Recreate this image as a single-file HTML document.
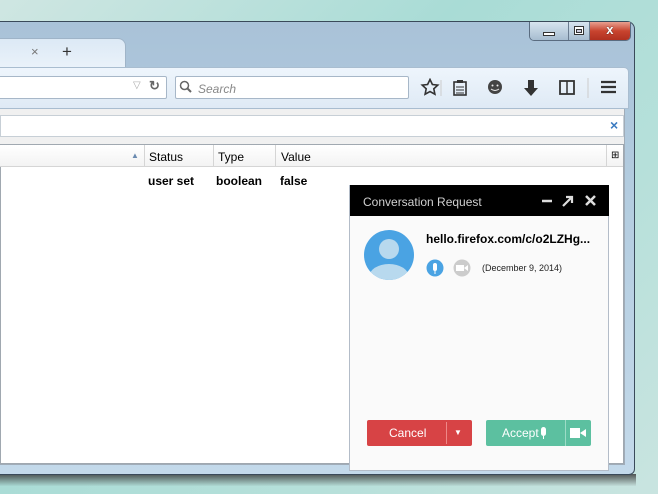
<!DOCTYPE html>
<html><head><meta charset="utf-8"><style>
*{margin:0;padding:0;box-sizing:border-box}
body{width:658px;height:494px;overflow:hidden;position:relative;font-family:"Liberation Sans",sans-serif;
background:linear-gradient(135deg,#cfe6e2 0%,#a9dcd6 40%,#b6e0da 70%,#c9e4e0 100%)}
.abs{position:absolute}
.shadow{left:0;top:474px;width:636px;height:12px;background:linear-gradient(rgba(60,60,60,0.85),rgba(120,120,120,0.05))}
.win{left:-4px;top:21px;width:639px;height:454px;border:1px solid #3a4a5a;border-radius:0 8px 6px 0;
background:linear-gradient(#a9c2d8,#b4cde0 40%,#c3d9ea)}
.cap{top:22px;left:529px;width:102px;height:19px;border:1px solid #5a6c80;border-top:none;border-radius:0 0 5px 5px;overflow:hidden;display:flex}
.cap>div{height:100%;position:relative}
.tab{left:-10px;top:38px;width:136px;height:30px;background:linear-gradient(#dce9f5,#eaf2fa);border:1px solid #9fb4c8;border-bottom:none;border-radius:0 8px 0 0}
.tb{left:0;top:67px;width:629px;height:42px;background:linear-gradient(#eef5fc,#dfeaf5);border-top:1px solid #a9bdd0;border-bottom:1px solid #a9bdd0;border-radius:0 5px 0 0;border-right:1px solid #a9bdd0}
.url{left:-4px;top:76px;width:171px;height:23px;background:#fff;border:1px solid #a7b7c8;border-radius:2px}
.srch{left:175px;top:76px;width:234px;height:23px;background:#fff;border:1px solid #a7b7c8;border-radius:2px;font-size:12px;font-style:italic;color:#888;padding:5px 0 0 22px}
.content{left:0;top:109px;width:625px;height:356px;background:#f0f0f0;border-right:1px solid #a0acb8;border-bottom:1px solid #a0acb8}
.filter{left:0;top:115px;width:624px;height:22px;background:#fff;border:1px solid #c7cfd6}
.tree{left:0;top:144px;width:624px;height:320px;background:#fff;border:1px solid #a0a8b0}
.hdr{left:0;top:145px;width:623px;height:22px;background:linear-gradient(#fff,#f3f3f3);border-bottom:1px solid #d5d5d5;font-size:12px;color:#000}
.hdr span{position:absolute;top:5px}
.vd{position:absolute;top:0;width:1px;height:22px;background:#d5d5d5}
.row{font-size:12px;font-weight:bold;top:174px}
.dlg{left:349px;top:185px;width:260px;height:286px;background:#fafafa;border:1px solid #b3bcc8;border-top:none}
.dh{left:350px;top:185px;width:259px;height:31px;background:#000;color:#d0d0d0;font-size:12px;padding:10px 0 0 13px}
.btn{height:26px;top:420px;border-radius:2px;color:#fff;font-size:12px}
</style></head><body>
<div class="abs shadow"></div>
<div class="abs win"></div>
<div class="abs cap">
 <div style="width:40px;background:linear-gradient(#d7e4ef,#a7bdd0);border-right:1px solid #6a7c90"><svg style="position:absolute;left0;top:0" width="40" height="19"><rect x="13.5" y="10.5" width="11" height="3" fill="#fff" stroke="#333"/></svg></div>
 <div style="width:21px;background:linear-gradient(#d7e4ef,#a7bdd0);border-right:1px solid #6a7c90"><svg style="position:absolute;left:0;top:0" width="21" height="19"><rect x="5.5" y="4.5" width="9" height="8" fill="#fff" stroke="#333"/><rect x="7.5" y="7.5" width="5" height="3" fill="#ccd" stroke="#333"/></svg></div>
 <div style="width:41px;background:linear-gradient(#e8a090,#c8442f 50%,#b03020);color:#fff;font-weight:bold;font-size:13px;text-align:center;line-height:16px;text-shadow:0 0 1px #000">x</div>
</div>
<div class="abs tab"></div>
<div class="abs" style="left:31px;top:44px;font-size:13px;color:#777">×</div>
<div class="abs" style="left:62px;top:42px;font-size:17px;color:#333">+</div>
<div class="abs tb"></div>
<div class="abs url"></div>
<div class="abs" style="left:133px;top:80px;font-size:10px;color:#aaa">▽</div>
<div class="abs" style="left:149px;top:78px;font-size:13px;color:#666;font-weight:bold">↻</div>
<div class="abs srch">Search</div>
<svg class="abs" style="left:179px;top:80px" width="14" height="14"><circle cx="5.5" cy="5.5" r="4" fill="none" stroke="#666" stroke-width="1.5"/><path d="M8.5 8.5L12 12" stroke="#666" stroke-width="2"/></svg>
<svg class="abs" style="left:420px;top:78px" width="200" height="20">
 <path d="M10 1.5l2.4 5 5.4.6-4 3.7 1.1 5.4L10 13.5 5.1 16.2l1.1-5.4-4-3.7 5.4-.6z" fill="none" stroke="#333" stroke-width="1.6"/>
 <path d="M21 2v16" stroke="#ccc"/>
 <rect x="34" y="4" width="12" height="13" fill="none" stroke="#333" stroke-width="1.6"/><rect x="37" y="2" width="6" height="3" fill="#333"/><path d="M36 9h8M36 12h8M36 15h8" stroke="#333"/>
 <circle cx="75" cy="9" r="7" fill="#444"/><path d="M71 11q4 3 8 0" stroke="#eee" fill="none"/><circle cx="72.5" cy="7.5" r="1" fill="#eee"/><circle cx="77.5" cy="7.5" r="1" fill="#eee"/>
 <path d="M108 2h6v8h4l-7 8-7-8h4z" fill="#333"/>
 <rect x="140" y="3" width="14" height="13" fill="none" stroke="#333" stroke-width="1.8"/><path d="M147 3v13" stroke="#333" stroke-width="1.5"/>
 <path d="M168 -2v26" stroke="#ccc"/>
 <path d="M181 4h15M181 9h15M181 14h15" stroke="#333" stroke-width="2.2"/>
</svg>
<div class="abs content"></div>
<div class="abs filter"></div>
<div class="abs" style="left:610px;top:117px;font-size:14px;color:#3a7ac0;font-weight:bold">×</div>
<div class="abs tree"></div>
<div class="abs hdr">
 <span style="left:131px;top:6px;font-size:8px;color:#6a8ab0">▲</span>
 <div class="vd" style="left:144px"></div><span style="left:149px">Status</span>
 <div class="vd" style="left:213px"></div><span style="left:218px">Type</span>
 <div class="vd" style="left:275px"></div><span style="left:281px">Value</span>
 <div class="vd" style="left:606px"></div><span style="left:611px;font-size:10px">⊞</span>
</div>
<div class="abs row" style="left:148px">user set</div>
<div class="abs row" style="left:216px">boolean</div>
<div class="abs row" style="left:280px">false</div>
<div class="abs dlg"></div>
<div class="abs dh">Conversation Request</div>
<svg class="abs" style="left:540px;top:194px" width="60" height="14"><path d="M2 7h10" stroke="#ddd" stroke-width="2.5"/><path d="M23 12l9-9M26 3h6v6" stroke="#ddd" stroke-width="2.2" fill="none"/><path d="M46 2l9 9M55 2l-9 9" stroke="#ddd" stroke-width="2.5"/></svg>
<svg class="abs" style="left:364px;top:230px" width="50" height="50"><defs><clipPath id="c"><circle cx="25" cy="25" r="25"/></clipPath></defs><circle cx="25" cy="25" r="25" fill="#4aa3e3"/><g clip-path="url(#c)"><circle cx="25" cy="19" r="10" fill="#b8d9ee"/><ellipse cx="25" cy="47" rx="20" ry="13" fill="#b8d9ee"/></g></svg>
<div class="abs" style="left:426px;top:232px;font-size:12px;font-weight:bold;color:#000">hello.firefox.com/c/o2LZHg...</div>
<svg class="abs" style="left:426px;top:259px" width="50" height="18"><circle cx="9" cy="9" r="8.5" fill="#4aa3e3"/><rect x="7" y="4" width="4" height="8" rx="2" fill="#fff"/><path d="M9 12v3" stroke="#fff"/><circle cx="36" cy="9" r="8.5" fill="#ccc"/><rect x="30" y="6" width="8" height="6" fill="#fff"/><path d="M38 9l4-3v6z" fill="#fff"/></svg>
<div class="abs" style="left:482px;top:263px;font-size:9px;color:#222">(December 9, 2014)</div>
<div class="abs btn" style="left:367px;width:105px;background:#d74345"><span style="position:absolute;left:22px;top:6px">Cancel</span><div style="position:absolute;left:79px;top:2px;width:1px;height:22px;background:#e88"></div><span style="position:absolute;left:87px;top:8px;font-size:8px">▼</span></div>
<div class="abs btn" style="left:486px;width:105px;background:#5cc0a0"><span style="position:absolute;left:16px;top:6px">Accept</span><svg style="position:absolute;left:54px;top:7px" width="8" height="12"><rect x="1" y="0" width="5" height="9" rx="2.5" fill="#fff"/><path d="M3.5 9v3" stroke="#fff"/></svg><div style="position:absolute;left:79px;top:0;width:1px;height:26px;background:#9ddcc6"></div><svg style="position:absolute;left:84px;top:8px" width="16" height="10"><rect x="0" y="0" width="10" height="10" fill="#fff"/><path d="M10 5l6-4v8z" fill="#fff"/></svg></div>
</body></html>
